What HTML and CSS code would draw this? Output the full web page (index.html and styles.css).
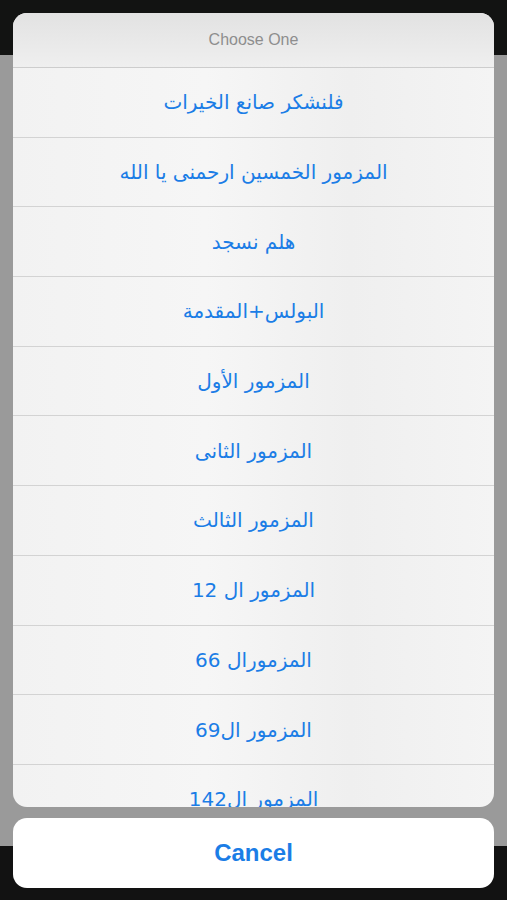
FILE: index.html
```html
<!DOCTYPE html>
<html lang="ar">
<head>
<meta charset="utf-8">
<link rel="stylesheet" href="styles.css">
</head>
<body>
<div class="screen">
  <div class="sheet">
    <div class="title">Choose One</div>
    <div class="row" dir="rtl">فلنشكر صانع الخيرات</div>
    <div class="row" dir="rtl">المزمور الخمسين ارحمنى يا الله</div>
    <div class="row" dir="rtl">هلم نسجد</div>
    <div class="row" dir="rtl">البولس+المقدمة</div>
    <div class="row" dir="rtl">المزمور الأول</div>
    <div class="row" dir="rtl">المزمور الثانى</div>
    <div class="row" dir="rtl">المزمور الثالث</div>
    <div class="row" dir="rtl">المزمور ال 12</div>
    <div class="row" dir="rtl">المزمورال 66</div>
    <div class="row" dir="rtl">المزمور ال69</div>
    <div class="row" dir="rtl">المزمور ال142</div>
  </div>
  <div class="cancel">Cancel</div>
</div>
</body>
</html>
```
FILE: styles.css
```css
html, body {
  margin: 0;
  padding: 0;
}
body {
  width: 507px;
  height: 900px;
  overflow: hidden;
  background: linear-gradient(#121312 0, #121312 55px, #9a9a9a 55px, #9a9a9a 846px, #121212 846px);
  font-family: "Liberation Sans", Arial, sans-serif;
}
.screen {
  padding: 13px 13px 0 13px;
  display: flex;
  flex-direction: column;
}
.sheet {
  height: 794px;
  border-radius: 14px;
  overflow: hidden;
  background: linear-gradient(90deg, #f2f2f2, #f6f6f6 40%, #efefef 70%, #f4f4f4);
}
.title {
  height: 55px;
  box-sizing: border-box;
  border-bottom: 1px solid #cdcdcd;
  display: flex;
  align-items: center;
  justify-content: center;
  color: #8e8e8e;
  font-size: 16px;
  background: linear-gradient(#e2e2e2, #efefef);
}
.row {
  height: 69.7px;
  box-sizing: border-box;
  border-bottom: 1px solid #d3d3d3;
  display: flex;
  align-items: center;
  justify-content: center;
  color: #1b7de6;
  font-family: "DejaVu Sans", "Noto Sans", sans-serif;
  font-size: 20px;
}
.cancel {
  margin-top: 11px;
  height: 70px;
  border-radius: 14px;
  background: #ffffff;
  display: flex;
  align-items: center;
  justify-content: center;
  color: #1b7de6;
  font-size: 24px;
  font-weight: 700;
}
```
